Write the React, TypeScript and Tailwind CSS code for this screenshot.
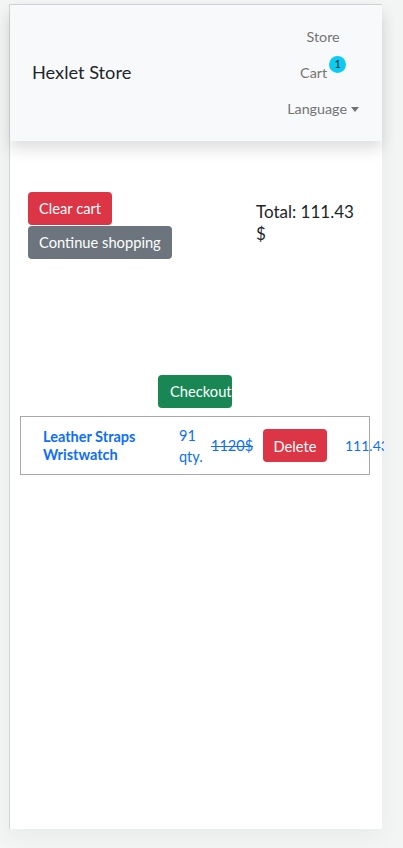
import React from "react";

const font = { fontFamily: "Lato, 'Open Sans', sans-serif" };

function NavBar() {
  return (
    <nav className="relative z-10 flex h-[136px] items-center justify-between bg-[#f8f9fa] pl-[22px] pr-[23px] shadow-[0_8px_14px_rgba(0,0,0,0.13)]">
      <span className="text-[18.2px] text-[#212529]">Hexlet Store</span>
      <ul className="flex flex-col items-center text-[14.3px] text-[#737373]">
        <li className="flex h-[36px] items-center">Store</li>
        <li className="flex h-[36px] items-center">
          Cart
          <span className="relative -top-[9px] ml-[2px] flex h-[17px] w-[17px] items-center justify-center rounded-full bg-[#0dcaf0] text-[11px] text-[#212529]">
            1
          </span>
        </li>
        <li className="flex h-[36px] items-center gap-[4px]">
          Language
          <span className="mt-[1px] h-0 w-0 border-x-[4.5px] border-t-[5px] border-x-transparent border-t-[#737373]" />
        </li>
      </ul>
    </nav>
  );
}

function CartRow() {
  return (
    <div className="flex h-[59px] items-center border border-[#a8a8a8] text-[14.5px] leading-[18px] text-[#0d6efd]">
      <div className="w-[158px] shrink-0 pl-[22px] font-bold">
        Leather Straps
        <br />
        Wristwatch
      </div>
      <div className="w-[32px] shrink-0 leading-[21px]">
        91
        <br />
        qty.
      </div>
      <div className="w-[52px] shrink-0 line-through">1120$</div>
      <div className="w-[82px] shrink-0">
        <button className="h-[33px] w-[64px] rounded-[4px] bg-[#dc3545] text-[14.7px] text-white">
          Delete
        </button>
      </div>
      <div className="w-[39px] shrink-0 overflow-hidden whitespace-nowrap text-[14px]">
        111.43
      </div>
    </div>
  );
}

export default function App() {
  return (
    <div
      className="min-h-[848px] bg-[#f3f4f4] pt-[4px] pl-[9px]"
      style={font}
    >
      <div className="h-[825px] w-[373px] border-t border-l border-[#d4d4d4] bg-white shadow-[0_10px_20px_rgba(0,0,0,0.04)]">
        <NavBar />
        <main className="px-[10px]">
          <div className="mt-[51px] flex h-[183px]">
            <div className="flex w-[236px] flex-col items-start pl-[8px]">
              <button className="h-[33px] rounded-[4px] bg-[#dc3545] px-[11px] text-[14.7px] text-white">
                Clear cart
              </button>
              <button className="mt-[1px] h-[33px] rounded-[4px] bg-[#6c757d] px-[11px] text-[14.7px] text-white">
                Continue shopping
              </button>
            </div>
            <h5 className="mt-[9px] w-[110px] text-[17px] leading-[22px] text-[#212529]">
              Total: 111.43 $
            </h5>
          </div>
          <div className="flex justify-center">
            <button className="-ml-[2px] h-[33px] w-[74px] whitespace-nowrap rounded-[4px] bg-[#198754] pl-[12px] text-left text-[14.7px] text-white">
              Checkout
            </button>
          </div>
          <div className="mt-[8px] w-[350px]">
            <CartRow />
          </div>
        </main>
      </div>
    </div>
  );
}
